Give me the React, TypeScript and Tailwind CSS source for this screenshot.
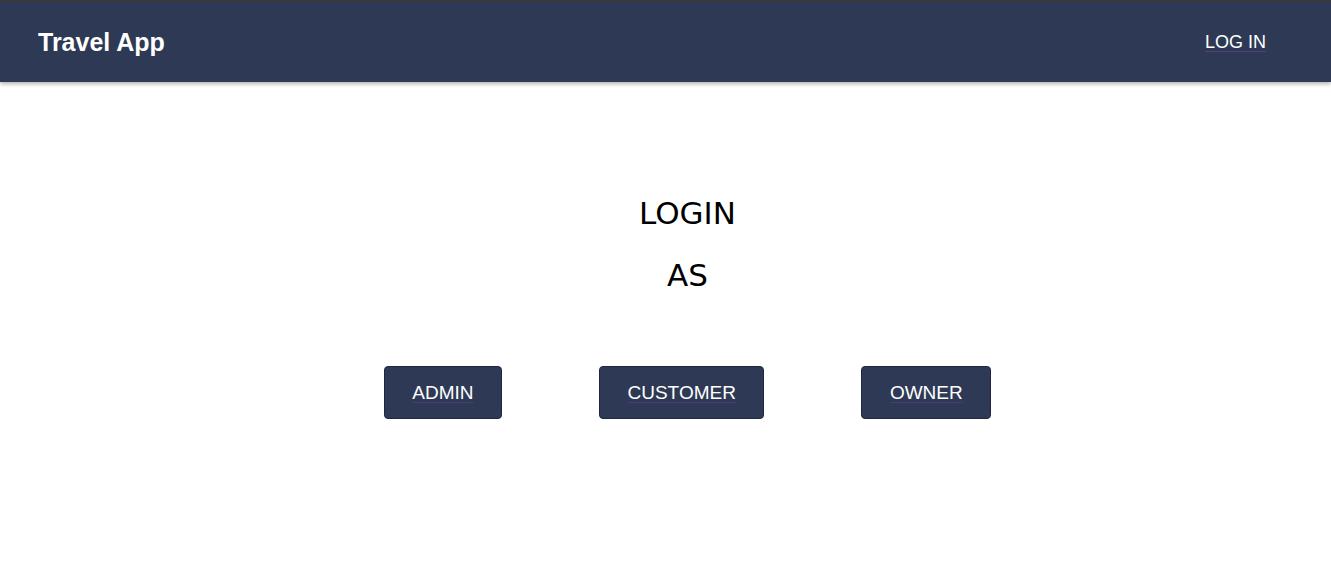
export default function App() {
  const roles = ["ADMIN", "CUSTOMER", "OWNER"];

  return (
    <div className="min-h-[583px] bg-white font-['Liberation_Sans',Arial,sans-serif]">
      <div className="h-[2px] bg-[#3b3b3b]" />
      <nav className="h-[80px] bg-[#2e3a55] flex items-center justify-between pl-[38px] pr-[65px] shadow-[0_2px_4px_rgba(0,0,0,0.3)]">
        <span className="text-white text-[25px] font-bold leading-none">Travel App</span>
        <a href="#" className="text-white text-[18px] leading-none underline decoration-[#5a3d7a] underline-offset-[3px]">
          LOG IN
        </a>
      </nav>

      <main className="flex flex-col items-center pl-[44px] pt-[100px]">
        <h1 className="text-[31px] leading-[62px] text-black font-['DejaVu_Sans',sans-serif] font-normal">LOGIN</h1>
        <h2 className="text-[31px] leading-[62px] text-black font-['DejaVu_Sans',sans-serif] font-normal">AS</h2>

        <div className="flex gap-[97px] mt-[60px]">
          {roles.map((role) => (
            <button
              key={role}
              className="h-[53px] px-[27.5px] rounded-[4px] bg-[#2e3a55] border border-[#1e2740] text-white text-[19px] leading-none"
            >
              <span className="underline decoration-[#4b3a78] underline-offset-[3px]">{role}</span>
            </button>
          ))}
        </div>
      </main>
    </div>
  );
}
